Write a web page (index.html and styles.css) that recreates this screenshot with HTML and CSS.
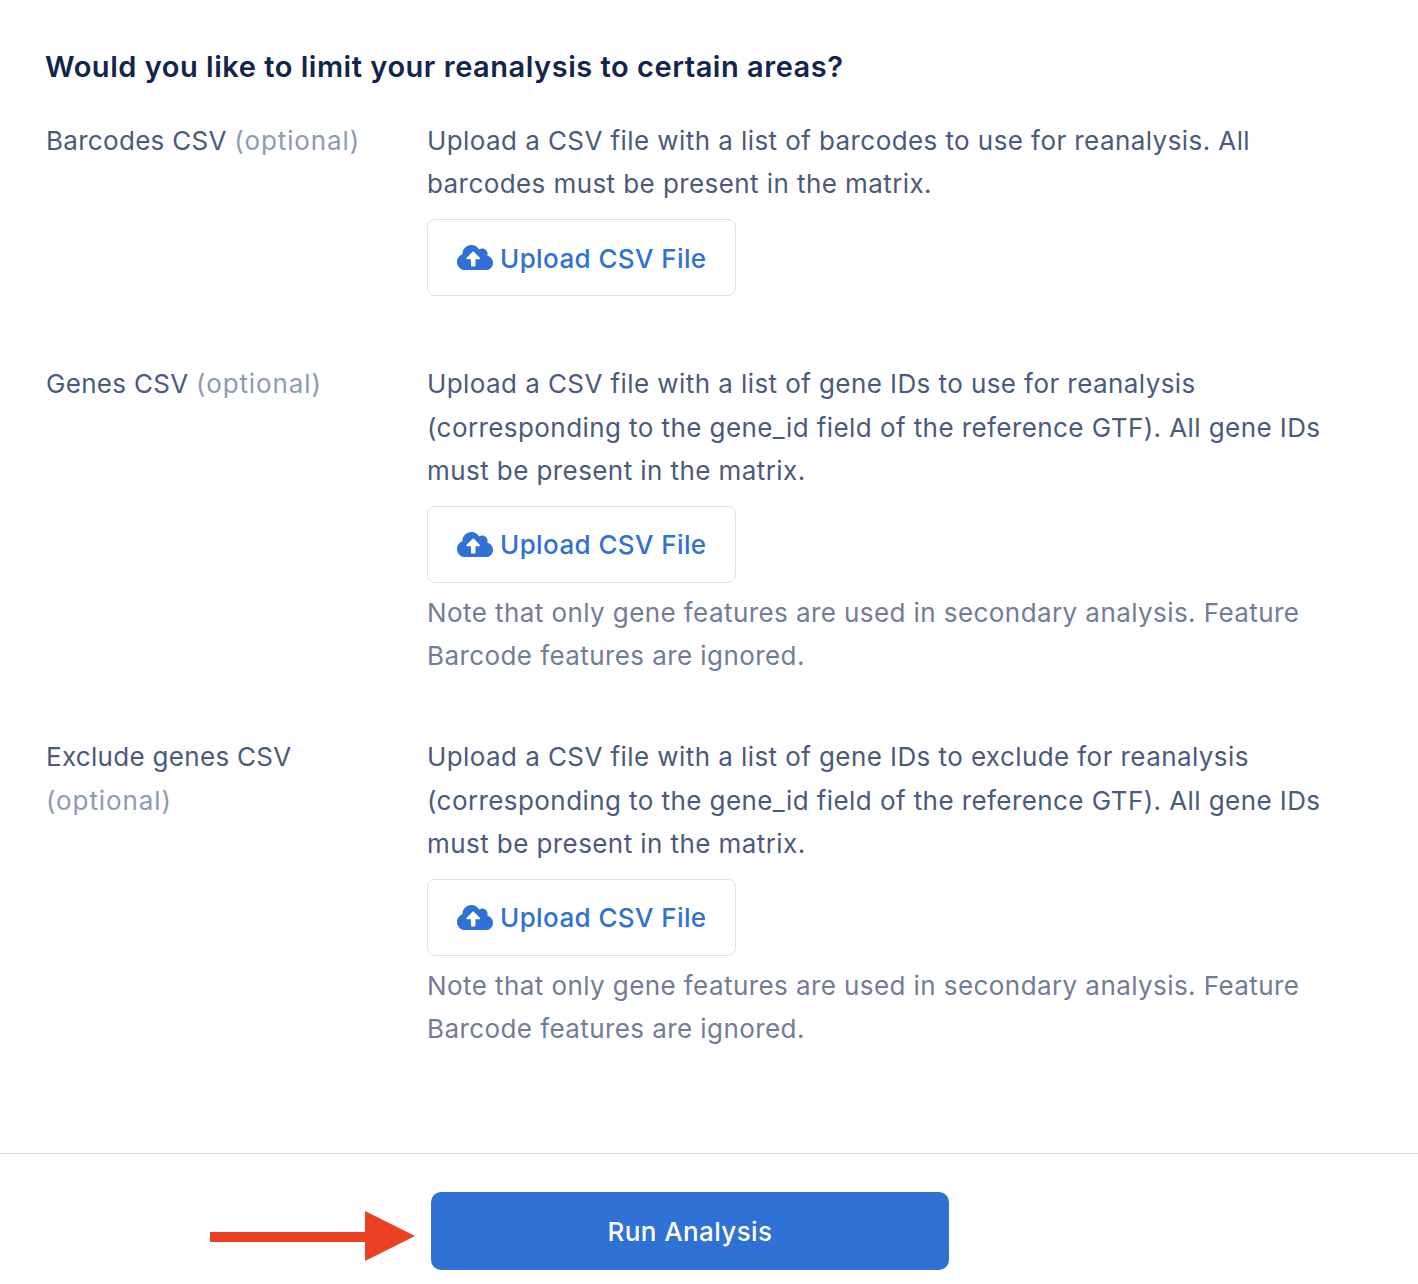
FILE: index.html
```html
<!DOCTYPE html>
<html lang="en">
<head>
    <meta charset="UTF-8">
    <title>Reanalysis</title>
    <link rel="stylesheet" href="styles.css">
</head>
<body>
    <svg class="icon-defs" width="0" height="0">
        <symbol id="cloud-upload" viewBox="0 0 640 512">
            <path fill="currentColor" d="M537.6 226.6c4.1-10.7 6.4-22.4 6.4-34.6 0-53-43-96-96-96-19.7 0-38.1 6-53.3 16.2C367 64.2 315.3 32 256 32c-88.4 0-160 71.6-160 160 0 2.7.1 5.4.2 8.1C40.2 219.8 0 273.2 0 336c0 79.5 64.5 144 144 144h368c70.7 0 128-57.3 128-128 0-61.9-44-113.6-102.4-125.4zM393.4 288H328v112c0 8.8-7.2 16-16 16h-48c-8.8 0-16-7.2-16-16V288h-65.4c-14.3 0-21.4-17.2-11.3-27.3l105.4-105.4c6.2-6.2 16.4-6.2 22.6 0l105.4 105.4c10.1 10.1 2.9 27.3-11.3 27.3z"/>
        </symbol>
    </svg>

    <div class="form">
        <h2 class="form-title">Would you like to limit your reanalysis to certain areas?</h2>

        <!-- Barcodes -->
        <div class="row row-barcodes">
            <div class="row-label">Barcodes CSV <span class="optional">(optional)</span></div>
            <div class="row-body">
                <p class="row-text">Upload a CSV file with a list of barcodes to use for reanalysis. All barcodes must be present in the matrix.</p>
                <button class="upload-btn">
                    <svg class="upload-icon"><use href="#cloud-upload"/></svg>
                    Upload CSV File
                </button>
            </div>
        </div>

        <!-- Genes -->
        <div class="row row-genes">
            <div class="row-label">Genes CSV <span class="optional">(optional)</span></div>
            <div class="row-body">
                <p class="row-text">Upload a CSV file with a list of gene IDs to use for reanalysis (corresponding to the gene_id field of the reference GTF). All gene IDs must be present in the matrix.</p>
                <button class="upload-btn">
                    <svg class="upload-icon"><use href="#cloud-upload"/></svg>
                    Upload CSV File
                </button>
                <p class="row-note">Note that only gene features are used in secondary analysis. Feature Barcode features are ignored.</p>
            </div>
        </div>

        <!-- Exclude genes -->
        <div class="row">
            <div class="row-label">Exclude genes CSV <span class="optional">(optional)</span></div>
            <div class="row-body">
                <p class="row-text">Upload a CSV file with a list of gene IDs to exclude for reanalysis (corresponding to the gene_id field of the reference GTF). All gene IDs must be present in the matrix.</p>
                <button class="upload-btn">
                    <svg class="upload-icon"><use href="#cloud-upload"/></svg>
                    Upload CSV File
                </button>
                <p class="row-note">Note that only gene features are used in secondary analysis. Feature Barcode features are ignored.</p>
            </div>
        </div>
    </div>

    <div class="footer">
        <svg class="arrow" viewBox="0 0 205 50">
            <path fill="#ec4025" d="M0 21h155V0l50 25-50 25V31H0z"/>
        </svg>
        <button class="run-btn">Run Analysis</button>
    </div>
</body>
</html>
```

FILE: styles.css
```css
* {
    margin: 0;
    padding: 0;
    box-sizing: border-box;
}

body {
    font-family: Inter, "Liberation Sans", sans-serif;
    background: #fff;
    color: #4a5a7c;
    font-size: 26px;
    line-height: 43.2px;
    letter-spacing: 0.42px;
    overflow: hidden;
}

.icon-defs {
    position: absolute;
}

.form {
    height: 1153px;
    padding: 45px 88px 0 45px;
}

.form-title {
    font-size: 29px;
    line-height: 43px;
    font-weight: 600;
    letter-spacing: 0.53px;
    color: #12264d;
    margin-bottom: 31px;
}

.row {
    display: grid;
    grid-template-columns: 382px 1fr;
}

.row-barcodes {
    margin-bottom: 58px;
}

.row-genes {
    margin-bottom: 58px;
}

.row-label {
    padding: 0 40px 0 1px;
    letter-spacing: 0.3px;
}

.optional {
    color: #8d9ab3;
    letter-spacing: 0.9px;
}

.upload-btn {
    display: flex;
    align-items: center;
    gap: 7px;
    width: 309px;
    height: 77px;
    margin: 14px 0 8px;
    padding: 1px 0 0 29px;
    background: #fff;
    border: 1px solid #dfe1e6;
    border-radius: 8px;
    font: inherit;
    font-weight: 500;
    letter-spacing: 0.4px;
    color: #2f71d4;
}

.upload-icon {
    width: 36px;
    height: 29px;
    margin-top: -1px;
}

.row-note {
    color: #707d96;
}

.footer {
    display: flex;
    align-items: center;
    gap: 16px;
    padding: 38px 0 0 210px;
    border-top: 1px solid #dfdfdf;
}

.arrow {
    width: 205px;
    height: 50px;
    margin-top: 10px;
}

.run-btn {
    width: 518px;
    height: 78px;
    padding-top: 2px;
    background: #2f71d4;
    border: none;
    border-radius: 10px;
    font: inherit;
    font-weight: 500;
    letter-spacing: 0.4px;
    color: #fff;
}
```
